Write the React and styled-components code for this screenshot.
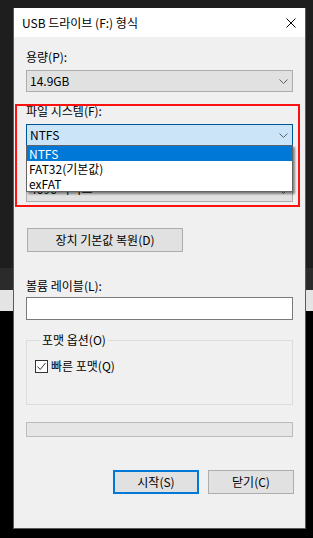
import styled, { createGlobalStyle } from 'styled-components';

const GlobalStyle = createGlobalStyle`
  html, body {
    margin: 0;
    padding: 0;
  }
  body {
    width: 313px;
    height: 538px;
    overflow: hidden;
    font-family: "Noto Sans CJK KR", "Noto Sans", sans-serif;
    font-size: 12px;
    color: #000;
    background: linear-gradient(
      to bottom,
      #1e1e1e 0,
      #1e1e1e 268px,
      #2b2b2b 268px,
      #2b2b2b 290px,
      #e4e4e4 290px,
      #e4e4e4 311px,
      #000 311px
    );
  }
`;

const Window = styled.div`
  box-sizing: border-box;
  width: 293px;
  height: 521px;
  margin: 8px 0 0 13px;
  border: 1px solid #5a5a5a;
  border-top: none;
  background: #f0f0f0;
  display: flex;
  flex-direction: column;
`;

const TitleBar = styled.div`
  height: 29px;
  background: #fff;
  display: flex;
  align-items: center;
  justify-content: space-between;
  padding: 0 9px 0 8px;
  line-height: 16px;
`;

const Body = styled.div`
  display: flex;
  flex-direction: column;
  padding: 0 12px;
`;

const Label = styled.div`
  line-height: 16px;
  height: 16px;
  margin-top: ${({ $top }) => $top}px;
  white-space: nowrap;
`;

const Spacer = styled.div`
  height: ${({ $h }) => $h}px;
  flex-shrink: 0;
`;

const ComboBox = styled.div`
  position: relative;
  box-sizing: border-box;
  height: 22px;
  margin-top: ${({ $top }) => $top}px;
  display: flex;
  align-items: center;
  justify-content: space-between;
  padding: 0 4px 0 3px;
  background: ${({ $focused }) => ($focused ? '#cce4f7' : '#e1e1e1')};
  border: 1px solid ${({ $focused }) => ($focused ? '#005499' : '#adadad')};
  line-height: 16px;
`;

const Section = styled.div`
  position: relative;
  display: flex;
  flex-direction: column;
`;

const Highlight = styled.div`
  position: absolute;
  top: 12px;
  left: -11px;
  right: -7px;
  bottom: -5px;
  border: 2px solid #ff1010;
  pointer-events: none;
  z-index: 3;
`;

const DropList = styled.ul`
  position: absolute;
  top: 100%;
  left: -1px;
  right: -1px;
  margin: 0;
  padding: 0;
  list-style: none;
  background: #fff;
  border: 1px solid #646464;
  box-shadow: 2px 2px 2px rgba(0, 0, 0, 0.45);
  z-index: 2;
`;

const Option = styled.li`
  height: 15px;
  line-height: 15px;
  padding-left: 2px;
  background: ${({ $selected }) => ($selected ? '#0078d7' : 'transparent')};
  color: ${({ $selected }) => ($selected ? '#fff' : '#000')};
`;

const Button = styled.button`
  box-sizing: border-box;
  width: ${({ $w }) => $w}px;
  height: 24px;
  margin: 0;
  padding: 0;
  font: inherit;
  line-height: 16px;
  color: #000;
  background: #e1e1e1;
  border: ${({ $default }) => ($default ? '2px solid #0078d7' : '1px solid #adadad')};
`;

const RestoreButton = styled(Button)`
  margin: 26px 0 0 1px;
`;

const TextInput = styled.div`
  box-sizing: border-box;
  height: 23px;
  margin-top: 3px;
  background: #fff;
  border: 1px solid #7a7a7a;
`;

const GroupBox = styled.fieldset`
  margin: 12px 0 0;
  padding: 0 8px 30px;
  border: 1px solid #dcdcdc;
  min-width: 0;
`;

const Legend = styled.legend`
  padding: 0 2px;
  margin-left: 5px;
  line-height: 16px;
`;

const CheckRow = styled.label`
  display: flex;
  align-items: center;
  gap: 3px;
  height: 16px;
  margin-top: 10px;
  line-height: 16px;
`;

const CheckBox = styled.span`
  box-sizing: border-box;
  width: 13px;
  height: 13px;
  background: #fff;
  border: 1px solid #333;
  display: flex;
  align-items: center;
  justify-content: center;
`;

const Progress = styled.div`
  box-sizing: border-box;
  height: 15px;
  margin-top: 17px;
  background: #e6e6e6;
  border: 1px solid #bcbcbc;
`;

const ButtonRow = styled.div`
  display: flex;
  justify-content: flex-end;
  gap: 9px;
  margin: 33px -1px 0 0;
`;

const HiddenValue = styled.span`
  color: #000;
  transform: translateY(-2px);
`;

const Chevron = () => (
  <svg width="9" height="5" viewBox="0 0 9 5">
    <path d="M0.5 0.5 L4.5 4.5 L8.5 0.5" fill="none" stroke="#606060" strokeWidth="1" />
  </svg>
);

const CloseIcon = () => (
  <svg width="10" height="10" viewBox="0 0 10 10">
    <path d="M0.5 0.5 L9.5 9.5 M9.5 0.5 L0.5 9.5" stroke="#000" strokeWidth="1" />
  </svg>
);

const fileSystems = ['NTFS', 'FAT32(기본값)', 'exFAT'];

export default function App() {
  return (
    <>
      <GlobalStyle />
      <Window>
        <TitleBar>
          <span>USB 드라이브 (F:) 형식</span>
          <CloseIcon />
        </TitleBar>
        <Body>
          <Label $top={12}>용량(P):</Label>
          <ComboBox $top={5}>
            <span>14.9GB</span>
            <Chevron />
          </ComboBox>

          <Section>
            <Highlight />
            <Label $top={11}>파일 시스템(F):</Label>
            <ComboBox $top={5} $focused>
              <span>NTFS</span>
              <Chevron />
              <DropList>
                {fileSystems.map((fs, i) => (
                  <Option key={fs} $selected={i === 0}>
                    {fs}
                  </Option>
                ))}
              </DropList>
            </ComboBox>
            {/* allocation-size row, covered by the open list */}
            <Spacer $h={27} />
            <ComboBox $top={7}>
              <HiddenValue>4096 바이트</HiddenValue>
              <Chevron />
            </ComboBox>
          </Section>

          <RestoreButton $w={156}>장치 기본값 복원(D)</RestoreButton>

          <Label $top={26}>볼륨 레이블(L):</Label>
          <TextInput />

          <GroupBox>
            <Legend>포맷 옵션(O)</Legend>
            <CheckRow>
              <CheckBox>
                <svg width="11" height="11" viewBox="0 0 11 11">
                  <path d="M1.5 5.5 L4.2 8.5 L9.5 2" fill="none" stroke="#333" strokeWidth="1" />
                </svg>
              </CheckBox>
              빠른 포맷(Q)
            </CheckRow>
          </GroupBox>

          <Progress />

          <ButtonRow>
            <Button $w={86} $default>
              시작(S)
            </Button>
            <Button $w={86}>닫기(C)</Button>
          </ButtonRow>
        </Body>
      </Window>
    </>
  );
}
